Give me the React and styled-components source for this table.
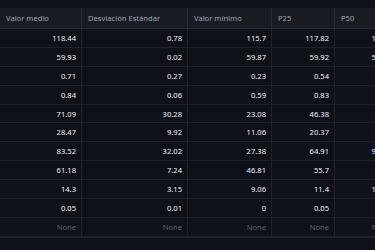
import React from 'react';
import styled, { createGlobalStyle } from 'styled-components';

const columns = [
    { title: 'Valor medio', width: 82 },
    { title: 'Desviación Estándar', width: 106 },
    { title: 'Valor mínimo', width: 84 },
    { title: 'P25', width: 63 },
    { title: 'P50', width: 62 },
];

const rows = [
    ['118.44', '0.78', '115.7', '117.82', '118.5'],
    ['59.93', '0.02', '59.87', '59.92', '59.93'],
    ['0.71', '0.27', '0.23', '0.54', '0.72'],
    ['0.84', '0.06', '0.59', '0.83', '0.84'],
    ['71.09', '30.28', '23.08', '46.38', '71.2'],
    ['28.47', '9.92', '11.06', '20.37', '28.5'],
    ['83.52', '32.02', '27.38', '64.91', '93.14'],
    ['61.18', '7.24', '46.81', '55.7', '61.6'],
    ['14.3', '3.15', '9.06', '11.4', '14.38'],
    ['0.05', '0.01', '0', '0.05', '0.05'],
    [null, null, null, null, null],
];

export default function App() {
    const template = columns.map((c) => `${c.width}px`).join(' ');
    return (
        <>
            <GlobalStyle />
            <Page>
                <Grid style={{ gridTemplateColumns: template }}>
                    {columns.map((c) => (
                        <HeaderCell key={c.title}>{c.title}</HeaderCell>
                    ))}
                    {rows.map((row, i) =>
                        row.map((v, j) => (
                            <Cell key={`${i}-${j}`} $empty={v === null}>
                                {v === null ? 'None' : v}
                            </Cell>
                        ))
                    )}
                </Grid>
            </Page>
        </>
    );
}

const GlobalStyle = createGlobalStyle`
    html, body {
        margin: 0;
        padding: 0;
        background: #0e1117;
    }
    body {
        font-family: "Noto Sans", "Open Sans", sans-serif;
    }
`;

const Page = styled.div`
    width: 375px;
    height: 250px;
    overflow: hidden;
    padding-top: 8px;
    box-sizing: border-box;
    background: #0e1117;
`;

const Grid = styled.div`
    display: grid;
    grid-template-rows: 21px;
    grid-auto-rows: 18.9px;
    width: max-content;
    border-bottom: 1px solid #22252d;
`;

const HeaderCell = styled.div`
    display: flex;
    align-items: center;
    padding: 0 6px;
    background: #1a1c24;
    color: #9ea2ad;
    font-size: 7.6px;
    white-space: nowrap;
    border-right: 1px solid #2a2d35;
    border-bottom: 1px solid #2a2d35;
    box-sizing: border-box;
`;

const Cell = styled.div`
    display: flex;
    align-items: center;
    justify-content: flex-end;
    padding: 0 5px;
    color: ${(p) => (p.$empty ? '#5d616b' : '#f2f2f4')};
    font-size: 7.6px;
    white-space: nowrap;
    border-right: 1px solid #1f222a;
    border-bottom: 1px solid #1f222a;
    box-sizing: border-box;
`;
